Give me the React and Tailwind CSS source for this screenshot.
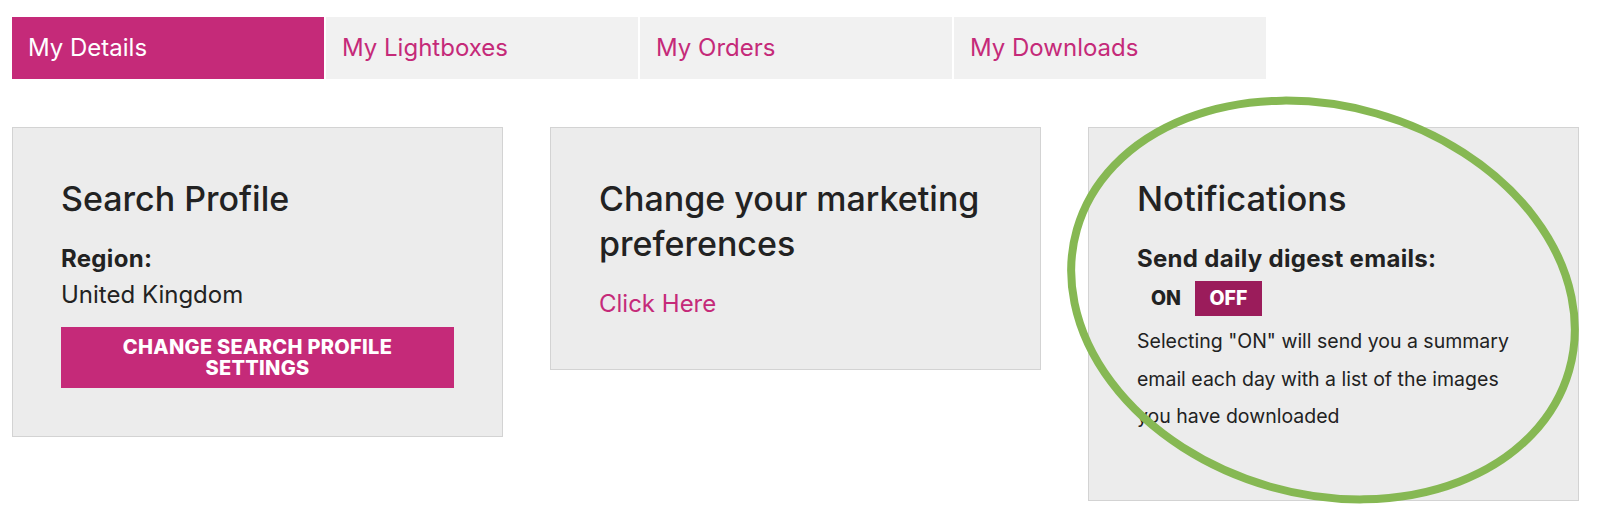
import React, { useState } from 'react';

const tabs = ['My Details', 'My Lightboxes', 'My Orders', 'My Downloads'];

const Card = ({ children, className = '' }) => (
  <div className={`w-[491px] shrink-0 border border-[#d3d3d3] bg-[#ececec] px-12 pt-12 ${className}`}>
    {children}
  </div>
);

export default function App() {
  const [active] = useState(0);
  const [digest, setDigest] = useState('off');

  return (
    <div
      className="relative h-[522px] w-[1600px] overflow-hidden bg-white text-[#222]"
      style={{ fontFamily: 'Inter, "Liberation Sans", sans-serif' }}
    >
      {/* tabs */}
      <div className="ml-3 mt-[17px] flex gap-[2px]">
        {tabs.map((t, i) => (
          <div
            key={t}
            className={`flex h-[62px] w-[312px] items-center pl-4 text-[24px] ${
              i === active ? 'bg-[#c52a79] text-white' : 'bg-[#f1f1f1] text-[#c52a79]'
            }`}
          >
            {t}
          </div>
        ))}
      </div>

      {/* cards */}
      <div className="ml-3 mt-12 flex items-start gap-[47px]">
        <Card className="pb-12">
          <h2 className="text-[34px] font-medium leading-[45px]">Search Profile</h2>
          <div className="mt-5 text-[24px] font-bold leading-9 tracking-[0.3px]">Region:</div>
          <div className="text-[24px] leading-9">United Kingdom</div>
          <button className="mt-[14px] flex h-[61px] w-full flex-col items-center justify-center bg-[#c52a79] text-[20px] font-extrabold uppercase leading-[21px] tracking-[0.3px] text-white">
            <span>Change search profile</span>
            <span>settings</span>
          </button>
        </Card>

        <Card className="pb-12">
          <h2 className="text-[34px] font-medium leading-[45px]">
            Change your marketing preferences
          </h2>
          <a href="#" className="mt-5 block text-[24px] leading-[35px] text-[#c52a79]">
            Click Here
          </a>
        </Card>

        <Card className="pb-16">
          <h2 className="text-[34.5px] font-medium leading-[45px]">Notifications</h2>
          <div className="mt-5 text-[24px] font-bold leading-9 tracking-[0.3px]">Send daily digest emails:</div>
          <div className="mt-1 flex">
            <button
              onClick={() => setDigest('on')}
              className={`h-[35px] w-[58px] text-[19.5px] font-extrabold ${
                digest === 'on' ? 'bg-[#9b1c5b] text-white' : 'text-[#222]'
              }`}
            >
              ON
            </button>
            <button
              onClick={() => setDigest('off')}
              className={`h-[35px] w-[67px] text-[19.5px] font-extrabold ${
                digest === 'off' ? 'bg-[#9b1c5b] text-white' : 'text-[#222]'
              }`}
            >
              OFF
            </button>
          </div>
          <p className="mt-[7px] text-[19.5px] leading-[37.5px]">
            Selecting "ON" will send you a summary email each day with a list of the images you have downloaded
          </p>
        </Card>
      </div>

      {/* highlight ring drawn over the notifications card */}
      <svg className="pointer-events-none absolute left-0 top-0" width="1600" height="522">
        <ellipse
          cx="1323"
          cy="300"
          rx="256"
          ry="194"
          transform="rotate(16 1323 300)"
          fill="none"
          stroke="#86b853"
          strokeWidth="8"
        />
      </svg>
    </div>
  );
}
